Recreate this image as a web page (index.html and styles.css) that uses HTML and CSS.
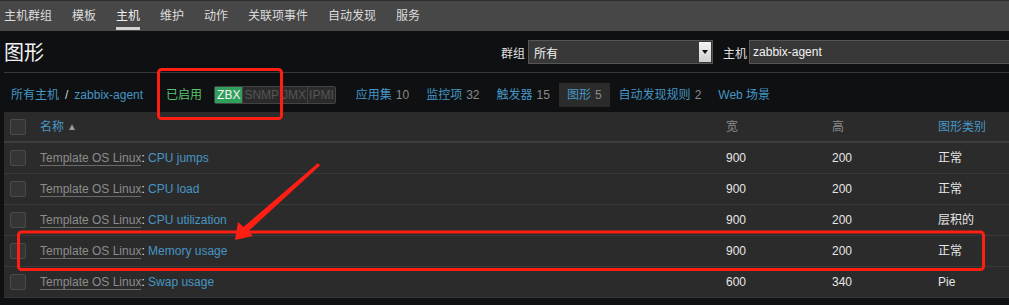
FILE: index.html
```html
<!doctype html>
<html>
  <head>
    <meta charset="utf-8">
    <link rel="stylesheet" href="styles.css">
  </head>
  <body>
    <div class="top-nav">
      <span class="nav-item">主机群组</span>
      <span class="nav-item">模板</span>
      <span class="nav-item active">主机</span>
      <span class="nav-item">维护</span>
      <span class="nav-item">动作</span>
      <span class="nav-item">关联项事件</span>
      <span class="nav-item">自动发现</span>
      <span class="nav-item">服务</span>
    </div>

    <div class="header">
      <h1 class="title">图形</h1>
      <div class="filter">
        <span class="filter-label">群组</span>
        <div class="select">
          <span>所有</span>
          <span class="select-btn"><span class="caret"></span></span>
        </div>
        <span class="filter-label host-label">主机</span>
        <div class="text-input">zabbix-agent</div>
      </div>
    </div>

    <ul class="host-tabs">
      <li>
        <a class="link">所有主机</a><span class="sep">/</span><a class="link">zabbix-agent</a>
      </li>
      <li class="status">
        <span class="enabled">已启用</span>
        <span class="badges">
          <span class="badge on">ZBX</span><span class="badge">SNMP</span><span class="badge">JMX</span><span class="badge">IPMI</span>
        </span>
      </li>
      <li><a class="link">应用集</a><span class="count">10</span></li>
      <li><a class="link">监控项</a><span class="count">32</span></li>
      <li><a class="link">触发器</a><span class="count">15</span></li>
      <li class="selected"><a class="link">图形</a><span class="count">5</span></li>
      <li><a class="link">自动发现规则</a><span class="count">2</span></li>
      <li><a class="link">Web 场景</a></li>
    </ul>

    <table class="list-table">
      <colgroup>
        <col style="width:30px">
        <col style="width:686px">
        <col style="width:106px">
        <col style="width:106px">
        <col>
      </colgroup>
      <thead>
        <tr>
          <th><span class="checkbox"></span></th>
          <th><a class="link">名称</a><span class="arrow-up">&#9650;</span></th>
          <th class="muted">宽</th>
          <th class="muted">高</th>
          <th><a class="link">图形类别</a></th>
        </tr>
      </thead>
      <tbody>
        <tr>
          <td><span class="checkbox"></span></td>
          <td><span class="tpl">Template OS Linux</span>: <a class="link">CPU jumps</a></td>
          <td>900</td><td>200</td><td>正常</td>
        </tr>
        <tr>
          <td><span class="checkbox"></span></td>
          <td><span class="tpl">Template OS Linux</span>: <a class="link">CPU load</a></td>
          <td>900</td><td>200</td><td>正常</td>
        </tr>
        <tr>
          <td><span class="checkbox"></span></td>
          <td><span class="tpl">Template OS Linux</span>: <a class="link">CPU utilization</a></td>
          <td>900</td><td>200</td><td>层积的</td>
        </tr>
        <tr>
          <td><span class="checkbox"></span></td>
          <td><span class="tpl">Template OS Linux</span>: <a class="link">Memory usage</a></td>
          <td>900</td><td>200</td><td>正常</td>
        </tr>
        <tr>
          <td><span class="checkbox"></span></td>
          <td><span class="tpl">Template OS Linux</span>: <a class="link">Swap usage</a></td>
          <td>600</td><td>340</td><td>Pie</td>
        </tr>
      </tbody>
    </table>

    <!-- annotation drawn over the screenshot -->
    <svg class="marks" width="1009" height="305" viewBox="0 0 1009 305">
      <rect x="158.5" y="69.5" width="123" height="49" rx="3" fill="none" stroke="#ff1e14" stroke-width="3"/>
      <rect x="18.5" y="232" width="965" height="37.5" rx="3" fill="none" stroke="#ff1e14" stroke-width="3"/>
      <polygon points="318,163 320,165.5 248.5,231 253,236 235,240 238,222 243.5,227" fill="#ff1e14"/>
    </svg>
  </body>
</html>
```
FILE: styles.css
```css
body {
  margin: 0;
  background-color: #0e1012;
  color: #f2f2f2;
  font-family: "Liberation Sans", "Noto Sans CJK SC", Arial, sans-serif;
  font-size: 12px;
  overflow: hidden;
  position: relative;
  width: 1009px;
  height: 305px;
}

a.link {
  color: #4796c4;
}

/* top menu */
.top-nav {
  height: 30px;
  border-top: 1px solid #2c2c2c;
  background-color: #474747;
  display: flex;
  align-items: center;
  padding-left: 4px;
  gap: 20px;
}
.nav-item {
  color: #dcdcdc;
  line-height: 30px;
  position: relative;
}
.nav-item.active {
  color: #f0f0f0;
}
.nav-item.active::after {
  content: "";
  position: absolute;
  left: 0;
  right: 0;
  bottom: 1px;
  height: 3px;
  background-color: #d2d2d2;
}

/* title + filter */
.header {
  display: flex;
  align-items: center;
  height: 41px;
  margin-left: 4px;
  border-bottom: 1px solid #383838;
  overflow: hidden;
}
.title {
  flex: 0 0 497px;
  margin: 0;
  font-size: 20px;
  font-weight: normal;
  line-height: 24px;
  padding-top: 2px;
  color: #f2f2f2;
}
.filter {
  display: flex;
  align-items: center;
  flex-shrink: 0;
  padding-top: 1px;
}
.filter-label {
  color: #e0e0e0;
  margin-right: 3px;
}
.host-label {
  margin-left: 10px;
  margin-right: 2px;
}
.select {
  width: 178px;
  height: 22px;
  border: 1px solid #555;
  background-color: #383838;
  display: flex;
  align-items: center;
  justify-content: space-between;
  padding-left: 5px;
}
.select-btn {
  width: 12px;
  height: 20px;
  margin-right: 1px;
  background: linear-gradient(#f4f4f4, #cfcfcf);
  display: flex;
  align-items: center;
  justify-content: center;
}
.caret {
  width: 0;
  height: 0;
  border-left: 3px solid transparent;
  border-right: 3px solid transparent;
  border-top: 4px solid #111;
}
.text-input {
  width: 300px;
  height: 22px;
  line-height: 22px;
  border: 1px solid #555;
  background-color: #383838;
  padding-left: 3px;
  color: #f2f2f2;
}

/* host navigation */
.host-tabs {
  list-style: none;
  margin: 0;
  padding: 10px 0 5px 3px;
  display: flex;
  gap: 1px;
}
.host-tabs li {
  height: 24px;
  line-height: 24px;
  padding: 0 8px;
  display: flex;
  align-items: center;
  white-space: pre;
}
.host-tabs li.selected {
  background-color: #2b2b2b;
}
.sep {
  color: #d8d8d8;
  margin: 0 6px;
}
.count {
  color: #8a8a8a;
  margin-left: 4px;
}
.status {
  gap: 12px;
  margin-left: 6px;
  margin-right: 3px;
}
.enabled {
  color: #5cc270;
}
.badges {
  display: flex;
  border: 1px solid #444;
  border-radius: 2px;
  height: 16px;
  line-height: 16px;
  background-color: #2a2a2a;
}
.badge {
  color: #555;
  padding: 0 1px;
  border-left: 1px solid #444;
}
.badge:first-child {
  border-left: none;
}
.badge.on {
  background-color: #2f9f5c;
  color: #f2f2f2;
  padding: 0 2px;
}

/* list */
.list-table {
  margin-left: 4px;
  width: 1005px;
  table-layout: fixed;
  border-collapse: collapse;
  background-color: #2b2b2b;
}
.list-table th {
  height: 29px;
  text-align: left;
  font-weight: normal;
  padding: 0 6px;
  border-bottom: 2px solid #3e3e3e;
  white-space: nowrap;
  line-height: 16px;
}
.list-table td {
  height: 30px;
  padding: 0 6px;
  border-bottom: 1px solid #383838;
  color: #e6e6e6;
  white-space: nowrap;
  line-height: 16px;
}
.muted {
  color: #8a8a8a;
}
.arrow-up {
  color: #9a9a9a;
  font-size: 10px;
  margin-left: 3px;
  vertical-align: 1px;
}
.checkbox {
  display: block;
  width: 14px;
  height: 14px;
  border: 1px solid #4b4b4b;
  border-radius: 2px;
  background-color: #353535;
}
.tpl {
  color: #8c8c8c;
  border-bottom: 1px solid #6a6a6a;
}

.marks {
  position: absolute;
  left: 0;
  top: 0;
  pointer-events: none;
}
```
